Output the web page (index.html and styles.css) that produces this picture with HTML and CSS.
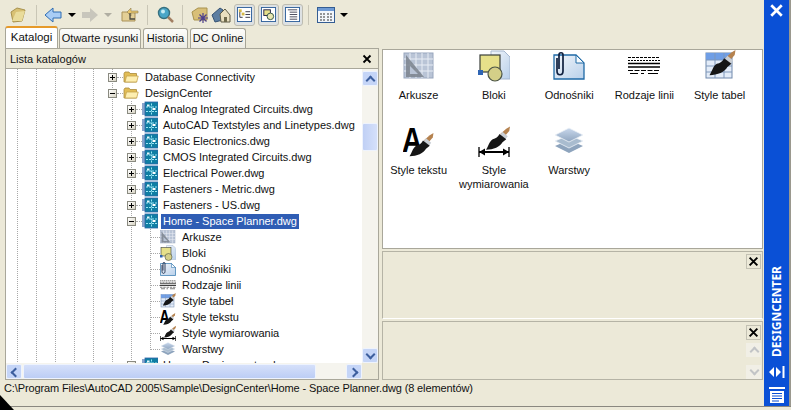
FILE: index.html
```html
<!DOCTYPE html>
<html lang="pl">
<head>
<meta charset="utf-8">
<title>DesignCenter</title>
<link rel="stylesheet" href="styles.css">
</head>
<body>
<svg class="defs" width="0" height="0" aria-hidden="true">
  <defs>
    <linearGradient id="g-doc" x1="0" y1="0" x2="1" y2="1"><stop offset="0" stop-color="#f2f6fb"/><stop offset="1" stop-color="#b9d0ea"/></linearGradient>
    <linearGradient id="g-lay" x1="0" y1="0" x2="0" y2="1"><stop offset="0" stop-color="#c9d8ec"/><stop offset="1" stop-color="#8fa5bf"/></linearGradient>
    <symbol id="i-folder" viewBox="0 0 16 16">
      <path d="M1 4.500 2 3h4l1 1.500h6.500V13H1z" fill="#e2bd55" stroke="#a98a3c" stroke-width=".8"/>
      <path d="M2 13 3.500 7h11.700L13.700 13z" fill="#fdeeb0" stroke="#c4a24c" stroke-width=".8"/>
    </symbol>
    <symbol id="i-dwg" viewBox="0 0 16 16">
      <rect x="0" y="2" width="3" height="12" fill="#8aa5cc"/>
      <rect x="3" y="1" width="13" height="14" fill="#0f7ea3" stroke="#2f66a8" stroke-width=".8"/>
      <path d="M9.500 2.500v11M4 6h11M4 10.500h11" stroke="#9be6f4" stroke-width="1" stroke-dasharray="2 1"/>
      <rect x="5" y="3.500" width="2.500" height="2" fill="#e6f8fc"/>
      <rect x="10.500" y="7" width="3" height="2" fill="#fff"/>
    </symbol>
    <symbol id="i-ark" viewBox="0 0 32 32">
      <rect x="1" y="3" width="29" height="25" fill="#b9c4d6" stroke="#98a6bd"/>
      <path d="M7 3v25M13 3v25M19 3v25M25 3v25M1 9h29M1 15h29M1 21h29" stroke="#e8edf5" stroke-width="1"/>
      <path d="M3 5v22h18z" fill="#7a828d" opacity=".85"/>
      <path d="M7 16v8h8z" fill="#b9c4d6"/>
    </symbol>
    <symbol id="i-blo" viewBox="0 0 32 32">
      <path d="M13 1h13l6 6v22H13z" fill="url(#g-doc)" stroke="#a5b7cf"/>
      <rect x="2" y="5" width="20" height="17" fill="#e6e08a" stroke="#3a3f3a" stroke-width="1.200"/>
      <circle cx="17" cy="24" r="7" fill="#d4cf88" stroke="#4b5445" stroke-width="1.200"/>
      <rect x="0" y="20" width="5" height="5" fill="#2f65b4"/>
    </symbol>
    <symbol id="i-odn" viewBox="0 0 32 32">
      <path d="M1 5h22l8 8v16H1z" fill="url(#g-doc)" stroke="#1f6aa6" stroke-width="1.300"/>
      <path d="M23 5v8h8z" fill="#f7fafd" stroke="#1f6aa6"/>
      <path d="M4 8v13c0 5 6 5 6 0V5c0-3-4-3-4 0v14" fill="none" stroke="#10203f" stroke-width="1.700"/>
    </symbol>
    <symbol id="i-lin" viewBox="0 0 32 32">
      <g fill="none" stroke="#000">
        <path d="M0 7.500h32" stroke-dasharray="3 1"/>
        <path d="M0 10.500h32" stroke-dasharray="2 1"/>
        <path d="M0 13.500h32" stroke-width="1.500"/>
        <path d="M0 17h32" stroke-width="1.500"/>
        <path d="M0 20.500h32" stroke-dasharray="5 1.500"/>
        <path d="M2 23.500h8M13 23.500h3M20 23.500h10"/>
      </g>
    </symbol>
    <symbol id="i-brush" viewBox="0 0 32 32">
      <path d="M32 0 31 6 24 14 19 10 27 3z" fill="#b5824f"/>
      <path d="M22 7l7 6-3 4-7-6z" fill="#c9ced4"/>
      <path d="M18 10l9 7-5 4c-3 6-12 10-22 10 3-4 4-11 9-14 4-1 7-3 9-7z" fill="#161616"/>
    </symbol>
    <symbol id="i-tab" viewBox="0 0 32 32">
      <rect x="2" y="3" width="26" height="25" fill="#e3ecf8" stroke="#7189ac"/>
      <rect x="2" y="3" width="26" height="7" fill="#6f9ee6"/>
      <path d="M2 10h26M2 16h26M2 22h26M11 3v25M20 3v25" stroke="#7f97ba"/>
      <use href="#i-brush" x="5" y="0" width="27" height="26"/>
    </symbol>
    <symbol id="i-txt" viewBox="0 0 32 32">
      <text class="glyph-a" transform="translate(-1 27) scale(.8 1)">A</text>
      <use href="#i-brush" x="5" y="8" width="27" height="24"/>
    </symbol>
    <symbol id="i-dim" viewBox="0 0 32 32">
      <use href="#i-brush" x="8" y="1" width="24" height="25"/>
      <path d="M1 22v10M31 22v10" stroke="#000" stroke-width="1.300"/>
      <path d="M1 27h30" stroke="#000" stroke-width="2"/>
      <path d="M1 27l6-3.500v7zM31 27l-6-3.500v7z" fill="#000"/>
    </symbol>
    <symbol id="i-lay" viewBox="0 0 32 32">
      <path d="M16 15 30 21 16 28 2 21z" fill="#8ea4bd"/>
      <path d="M16 10 30 16 16 23 2 16z" fill="#a9bccf" stroke="#eef3f8" stroke-width=".8"/>
      <path d="M16 3 30 10 16 17 2 10z" fill="url(#g-lay)" stroke="#eef3f8" stroke-width=".8"/>
    </symbol>
    <symbol id="i-x" viewBox="0 0 10 10">
      <path d="M1.500 1.500l7 7M8.500 1.500l-7 7" fill="none" stroke="currentColor" stroke-width="1.800"/>
    </symbol>
  </defs>
</svg>

<div class="window">
  <div class="main">
    <div class="toolbar">
      <button class="tool" aria-label="Ładuj">
        <svg width="18" height="18" viewBox="0 0 18 18"><path d="M2 6 8 2l8 2-3 11-9 1z" fill="#d8c173" stroke="#a8924e"/><path d="M3 15 7 6l9-1-3 10z" fill="#e9dc9b"/></svg>
      </button>
      <span class="sep sep-a"></span>
      <button class="tool tool-nav" aria-label="Wstecz">
        <svg width="18" height="18" viewBox="0 0 18 18"><path d="M1 9 9 2v4h8v6H9v4z" fill="#a9cdf5" stroke="#2f6db3"/></svg>
      </button>
      <span class="drop"></span>
      <button class="tool tool-nav" aria-label="Dalej">
        <svg width="18" height="18" viewBox="0 0 18 18"><path d="M17 9 9 2v4H1v6h8v4z" fill="#c8c6bc"/></svg>
      </button>
      <span class="drop drop-off"></span>
      <button class="tool" aria-label="W górę">
        <svg width="18" height="18" viewBox="0 0 18 18"><path d="M1 6h13V15H1z" fill="#e3cf96" stroke="#a99159"/><path d="M10 2v3h7v2h-7v3L6 6z" fill="#e7c56c" stroke="#8f7f55" stroke-width=".6"/><path d="M9 7v6h5" fill="none" stroke="#4a4a42" stroke-width="1.300"/></svg>
      </button>
      <span class="sep"></span>
      <button class="tool" aria-label="Szukaj">
        <svg width="18" height="18" viewBox="0 0 18 18"><circle cx="8" cy="7" r="5.500" fill="#4aa6c8" stroke="#37707f" stroke-width="1.400"/><circle cx="7" cy="5.500" r="2" fill="#c7ecf4"/><path d="m12 11 5 5" stroke="#a27f63" stroke-width="2.500"/></svg>
      </button>
      <span class="sep"></span>
      <button class="tool" aria-label="Ulubione">
        <svg width="18" height="18" viewBox="0 0 18 18"><path d="M1 6 7 2h9v12H3z" fill="#d8bf78" stroke="#a8924e"/><path d="M12 7v10M7 12h10M8.500 8.500l7 7M15.500 8.500l-7 7" stroke="#4b3f8e" stroke-width="1.200"/></svg>
      </button>
      <button class="tool" aria-label="Strona główna">
        <svg width="20" height="18" viewBox="0 0 20 18"><path d="M1 9 9 2l3 2v10L4 16z" fill="#5c7ea1" stroke="#345273"/><path d="m9 8 5-5 5 6v7H10z" fill="#e9dfbf" stroke="#5e5b46"/><rect x="13" y="11" width="3" height="5" fill="#6f6a4c"/></svg>
      </button>
      <button class="tool toggle" aria-label="Widok drzewa">
        <svg width="15" height="15" viewBox="0 0 16 16"><rect x=".5" y=".5" width="15" height="15" fill="#fff" stroke="#31619c"/><path d="M3 4v7h3M9 5h5M9 8h5M9 11h5" stroke="#334" fill="none"/><rect x="2" y="2.500" width="3" height="3" fill="#d4b84a"/><rect x="5" y="6" width="3" height="3" fill="#d4b84a"/></svg>
      </button>
      <button class="tool toggle" aria-label="Podgląd">
        <svg width="15" height="15" viewBox="0 0 16 16"><rect x=".5" y=".5" width="15" height="15" fill="#fff" stroke="#31619c"/><rect x="3" y="3" width="7" height="6" fill="#e6e08a" stroke="#224"/><circle cx="10" cy="10" r="3.500" fill="#e8e6b0" stroke="#354"/></svg>
      </button>
      <button class="tool toggle" aria-label="Opis">
        <svg width="15" height="15" viewBox="0 0 16 16"><rect x=".5" y=".5" width="15" height="15" fill="#fff" stroke="#31619c"/><path d="M3 3h10M5 5.500h8M5 8h8M5 10.500h8M5 13h8" stroke="#445"/></svg>
      </button>
      <span class="sep sep-c"></span>
      <button class="tool" aria-label="Widoki">
        <svg width="18" height="16" viewBox="0 0 18 16"><rect x=".5" y=".5" width="17" height="15" fill="#f2f6fb" stroke="#345d93"/><rect x="1" y="1" width="16" height="3" fill="#6f9bd5"/><path d="M3 7h5M10 7h5M3 10h5M10 10h5M3 13h5M10 13h5" stroke="#333" stroke-dasharray="2 1"/></svg>
      </button>
      <span class="drop"></span>
    </div>

    <div class="tabs">
      <div class="tab tab-active">Katalogi</div>
      <div class="tab tab-open">Otwarte rysunki</div>
      <div class="tab tab-hist">Historia</div>
      <div class="tab tab-dc">DC Online</div>
    </div>

    <div class="panes">
      <section class="left">
        <header class="left-head"><span>Lista katalogów</span><svg class="x"><use href="#i-x"/></svg></header>
        <div class="left-body">
          <div class="tree-wrap">
            <ul class="tree">
              <li class="row d1"><span class="box plus"></span><span class="dash"></span><svg class="ic"><use href="#i-folder"/></svg><span class="lbl">Database Connectivity</span></li>
              <li class="row d1"><span class="box minus"></span><span class="dash"></span><svg class="ic"><use href="#i-folder"/></svg><span class="lbl">DesignCenter</span></li>
              <li class="row d2"><span class="box plus"></span><span class="dash"></span><svg class="ic"><use href="#i-dwg"/></svg><span class="lbl">Analog Integrated Circuits.dwg</span></li>
              <li class="row d2"><span class="box plus"></span><span class="dash"></span><svg class="ic"><use href="#i-dwg"/></svg><span class="lbl">AutoCAD Textstyles and Linetypes.dwg</span></li>
              <li class="row d2"><span class="box plus"></span><span class="dash"></span><svg class="ic"><use href="#i-dwg"/></svg><span class="lbl">Basic Electronics.dwg</span></li>
              <li class="row d2"><span class="box plus"></span><span class="dash"></span><svg class="ic"><use href="#i-dwg"/></svg><span class="lbl">CMOS Integrated Circuits.dwg</span></li>
              <li class="row d2"><span class="box plus"></span><span class="dash"></span><svg class="ic"><use href="#i-dwg"/></svg><span class="lbl">Electrical Power.dwg</span></li>
              <li class="row d2"><span class="box plus"></span><span class="dash"></span><svg class="ic"><use href="#i-dwg"/></svg><span class="lbl">Fasteners - Metric.dwg</span></li>
              <li class="row d2"><span class="box plus"></span><span class="dash"></span><svg class="ic"><use href="#i-dwg"/></svg><span class="lbl">Fasteners - US.dwg</span></li>
              <li class="row d2"><span class="box minus"></span><span class="dash"></span><svg class="ic"><use href="#i-dwg"/></svg><span class="lbl sel">Home - Space Planner.dwg</span></li>
              <li class="row d3"><span class="dash3"></span><svg class="ic"><use href="#i-ark"/></svg><span class="lbl">Arkusze</span></li>
              <li class="row d3"><span class="dash3"></span><svg class="ic"><use href="#i-blo"/></svg><span class="lbl">Bloki</span></li>
              <li class="row d3"><span class="dash3"></span><svg class="ic"><use href="#i-odn"/></svg><span class="lbl">Odnośniki</span></li>
              <li class="row d3"><span class="dash3"></span><svg class="ic"><use href="#i-lin"/></svg><span class="lbl">Rodzaje linii</span></li>
              <li class="row d3"><span class="dash3"></span><svg class="ic"><use href="#i-tab"/></svg><span class="lbl">Style tabel</span></li>
              <li class="row d3"><span class="dash3"></span><svg class="ic"><use href="#i-txt"/></svg><span class="lbl">Style tekstu</span></li>
              <li class="row d3"><span class="dash3"></span><svg class="ic"><use href="#i-dim"/></svg><span class="lbl">Style wymiarowania</span></li>
              <li class="row d3"><span class="dash3"></span><svg class="ic"><use href="#i-lay"/></svg><span class="lbl">Warstwy</span></li>
              <li class="row d2"><span class="box plus"></span><span class="dash"></span><svg class="ic"><use href="#i-dwg"/></svg><span class="lbl">Home - Designcenter.dwg</span></li>
            </ul>
            <div class="vbar">
              <span class="sb-btn up"></span>
              <span class="sb-thumb-v"></span>
              <span class="sb-fill"></span>
              <span class="sb-btn down"></span>
            </div>
          </div>
          <div class="hbar">
            <div class="htrack">
              <span class="sb-btn left-b"></span>
              <span class="sb-thumb-h"></span>
              <span class="sb-btn right-b"></span>
            </div>
          </div>
        </div>
      </section>

      <div class="right">
        <div class="content">
          <figure class="item"><svg class="big"><use href="#i-ark"/></svg><figcaption>Arkusze</figcaption></figure>
          <figure class="item"><svg class="big"><use href="#i-blo"/></svg><figcaption>Bloki</figcaption></figure>
          <figure class="item"><svg class="big"><use href="#i-odn"/></svg><figcaption>Odnośniki</figcaption></figure>
          <figure class="item"><svg class="big"><use href="#i-lin"/></svg><figcaption>Rodzaje linii</figcaption></figure>
          <figure class="item"><svg class="big"><use href="#i-tab"/></svg><figcaption>Style tabel</figcaption></figure>
          <figure class="item"><svg class="big"><use href="#i-txt"/></svg><figcaption>Style tekstu</figcaption></figure>
          <figure class="item"><svg class="big"><use href="#i-dim"/></svg><figcaption>Style wymiarowania</figcaption></figure>
          <figure class="item"><svg class="big"><use href="#i-lay"/></svg><figcaption>Warstwy</figcaption></figure>
        </div>
        <div class="preview"><span class="close-sq"><svg><use href="#i-x"/></svg></span></div>
        <div class="descr">
          <span class="close-sq"><svg><use href="#i-x"/></svg></span>
          <span class="mini-btn mini-up"></span>
          <span class="mini-btn mini-down"></span>
        </div>
      </div>
    </div>

    <div class="status">C:\Program Files\AutoCAD 2005\Sample\DesignCenter\Home - Space Planner.dwg (8 elementów)</div>
  </div>

  <aside class="side">
    <svg class="side-x"><use href="#i-x"/></svg>
    <span class="side-title">DESIGNCENTER</span>
    <svg class="side-auto" width="16" height="12" viewBox="0 0 16 12"><path d="M0 6l5-5v10zM7 1l5 5-5 5z" fill="#fff"/><path d="M13.500 0h2v12h-2z" fill="#fff"/></svg>
    <svg class="side-menu" width="16" height="16" viewBox="0 0 16 16"><path d="M0 0h16v2H0zM1 4h14v12H1z" fill="#fff"/><path d="M3 6.500h10M3 9h10M3 11.500h10M3 14h7" stroke="#0a4fd4" stroke-width="1.200"/></svg>
  </aside>
</div>
<span class="corner"></span>
</body>
</html>
```
FILE: styles.css
```css
* { box-sizing: border-box; }
html, body { margin: 0; padding: 0; }
body {
  width: 791px;
  height: 410px;
  overflow: hidden;
  position: relative;
  background: #ece9d8;
  font: 11px/16px "Liberation Sans", Arial, sans-serif;
  color: #111;
}
.defs { position: absolute; }
.glyph-a { font: 700 35px "Liberation Sans", Arial, sans-serif; fill: #000; }

.window { display: flex; width: 791px; height: 407px; border-bottom: 1px solid #8a8880; }
.main { width: 764px; display: flex; flex-direction: column; padding-left: 2px; }

.toolbar { height: 26px; display: flex; align-items: center; padding-left: 5px; padding-top: 3px; }
.tool {
  width: 21px; height: 22px; padding: 0; border: 0; background: none; flex: none;
  display: flex; align-items: center; justify-content: center;
}
.tool-nav { width: 22px; }
.toggle { height: 22px; background: #dde1e3; border: 1px solid #bdbcb0; border-radius: 3px; margin-left: 3px; }
.sep { width: 1px; height: 20px; flex: none; background: #c9c6b6; margin: 0 6px 0 7px; }
.sep-a { margin: 0 5px 0 8px; }
.sep-c { margin: 0 6px 0 5px; }
.drop { width: 0; height: 0; flex: none; border: 4px solid transparent; border-top: 4px solid #000; border-bottom: 0; margin: 0 3px 0 4px; }
.drop-off { border-top-color: #b0aea2; margin: 0 7px 0 3px; }

.tabs { height: 22px; display: flex; padding-left: 3px; font-size: 11px; }
.tab {
  height: 21px; margin-top: 2px; margin-right: 2px; padding: 0;
  line-height: 19px; text-align: center; white-space: nowrap;
  background: linear-gradient(#fdfdfb, #ecebe2);
  border: 1px solid #a7a597; border-bottom: 0; border-radius: 3px 3px 0 0;
}
.tab-active { width: 53px; height: 22px; margin-top: 0; margin-right: 1px; background: #fff; border-top: 2px solid #e69a2a; line-height: 18px; font-size: 11.5px; }
.tab-open { width: 82px; }
.tab-hist { width: 45px; }
.tab-dc { width: 56px; }

.panes { height: 332px; display: flex; gap: 3px; }
.left { width: 374px; flex: none; display: flex; flex-direction: column; margin-left: 3px; border: 1px solid #a9a79a; }
.left-head { height: 20px; flex: none; padding: 0 6px 0 4px; display: flex; justify-content: space-between; align-items: center; border-bottom: 1px solid #a9a79a; }
.x { width: 10px; height: 10px; color: #000; }
.left-body { flex: 1; display: flex; flex-direction: column; min-height: 0; }
.tree-wrap { flex: 1; display: flex; min-height: 0; background: #fff; }
.tree {
  list-style: none; margin: 0; padding: 0; flex: 1; overflow: hidden;
  background-image:
    repeating-linear-gradient(#a8a8a8 0 1px, transparent 1px 2px),
    repeating-linear-gradient(#a8a8a8 0 1px, transparent 1px 2px),
    repeating-linear-gradient(#a8a8a8 0 1px, transparent 1px 2px),
    repeating-linear-gradient(#a8a8a8 0 1px, transparent 1px 2px),
    repeating-linear-gradient(#a8a8a8 0 1px, transparent 1px 2px),
    repeating-linear-gradient(#a8a8a8 0 1px, transparent 1px 2px),
    repeating-linear-gradient(#a8a8a8 0 1px, transparent 1px 2px),
    repeating-linear-gradient(#a8a8a8 0 1px, transparent 1px 2px);
  background-repeat: no-repeat;
  background-size: 1px 100%, 1px 100%, 1px 100%, 1px 100%, 1px 100%, 1px 100%, 1px 100%, 1px 120px;
  background-position: 11px 0, 30px 0, 49px 0, 68px 0, 87px 0, 106px 0, 125px 32px, 144px 160px;
}
.row { height: 16px; display: flex; align-items: center; white-space: nowrap; }
.d1 { padding-left: 102px; }
.d2 { padding-left: 121px; }
.d3 { padding-left: 144px; }
.box {
  width: 9px; height: 9px; flex: none; position: relative; background: linear-gradient(135deg, #fff, #d8d4c4);
  border: 1px solid #8a8a80;
}
.plus::before, .minus::before { content: ""; position: absolute; left: 1px; top: 3px; width: 5px; height: 1px; background: #000; }
.plus::after { content: ""; position: absolute; left: 3px; top: 1px; width: 1px; height: 5px; background: #000; }
.dash { height: 1px; flex: none; border-top: 1px dotted #a8a8a8; }
.d1 .dash { width: 6px; }
.d2 .dash { width: 6px; }
.dash3 { width: 10px; height: 1px; flex: none; border-top: 1px dotted #a8a8a8; }
.ic { width: 16px; height: 16px; flex: none; }
.lbl { padding: 0 2px; margin-left: 3px; height: 15px; line-height: 15px; }
.d1 .lbl, .d3 .lbl { margin-left: 4px; }
.sel { background: #2f5db4; color: #fff; }

.vbar { width: 16px; flex: none; display: flex; flex-direction: column; background: #f5f4ee; padding-top: 2px; }
.sb-btn { flex: none; width: 16px; height: 15px; position: relative; background: #c5d5f7; border: 1px solid #eef3fd; border-radius: 2px; }
.sb-btn::after { content: ""; position: absolute; width: 5px; height: 5px; border: solid #3d5f9e; border-width: 2px 0 0 2px; }
.up::after { left: 4px; top: 5px; transform: rotate(45deg); }
.down::after { left: 4px; top: 2px; transform: rotate(225deg); }
.left-b::after { left: 5px; top: 4px; transform: rotate(-45deg); }
.right-b::after { left: 3px; top: 4px; transform: rotate(135deg); }
.sb-thumb-v { flex: none; height: 28px; margin-top: 37px; width: 16px; background: linear-gradient(90deg, #c0d0f5, #d5e0fa); border: 1px solid #eef3fd; border-radius: 2px; }
.sb-fill { flex: 1; }
.hbar { height: 16px; flex: none; display: flex; padding-right: 16px; }
.htrack { flex: 1; display: flex; align-items: center; background: #f5f4ee; }
.sb-thumb-h { width: 293px; height: 15px; margin-left: 1px; background: linear-gradient(#d5e0fa, #bccdf5); border: 1px solid #eef3fd; border-radius: 2px; }
.htrack .right-b { margin-left: auto; }

.right { flex: 1; display: flex; flex-direction: column; gap: 2px; padding-right: 1px; }
.content {
  height: 201px; background: #fff; border: 1px solid #a9a79a; margin-top: 1px;
  display: grid; grid-template-columns: repeat(5, 75.25px); grid-auto-rows: 75px;
}
.item { margin: 0 0 0 -4px; display: flex; flex-direction: column; align-items: center; }
.big { width: 32px; height: 32px; flex: none; }
.item figcaption { margin-top: 6px; text-align: center; line-height: 14px; }
.preview { height: 68px; border: 1px solid #b5b3a5; border-bottom-color: #fff; display: flex; justify-content: flex-end; padding: 2px 1px 0 0; }
.descr { flex: 1; border: 1px solid #b5b3a5; display: flex; flex-direction: column; align-items: flex-end; padding: 3px 1px 0 0; }
.close-sq { width: 15px; height: 15px; flex: none; display: flex; align-items: center; justify-content: center; background: #ece9d8; border: 1px solid #c3c1b3; color: #000; }
.close-sq svg { width: 11px; height: 11px; }
.mini-btn { width: 15px; height: 14px; flex: none; position: relative; background: #f1efe6; }
.mini-up { margin-top: 3px; }
.mini-down { margin-top: 8px; }
.mini-btn::after { content: ""; position: absolute; left: 5px; width: 5px; height: 5px; border: solid #c2c4c6; border-width: 2px 0 0 2px; }
.mini-up::after { top: 5px; transform: rotate(45deg); }
.mini-down::after { top: 2px; transform: rotate(225deg); }

.status { height: 20px; padding-left: 2px; line-height: 16px; white-space: nowrap; letter-spacing: -0.12px; }

.side {
  width: 27px; background: #0a50d6; border-right: 2px solid #9a988e;
  display: flex; flex-direction: column; align-items: center; color: #fff;
}
.side-x { width: 15px; height: 15px; flex: none; margin-top: 3px; }
.side-title {
  margin-top: auto; writing-mode: vertical-rl; transform: rotate(180deg);
  font: 700 12px/16px "Noto Sans", sans-serif;
}
.side-auto { margin-top: 9px; flex: none; }
.side-menu { margin-top: 9px; margin-bottom: 3px; flex: none; }

.corner {
  position: absolute; left: 0; bottom: 0; width: 0; height: 0;
  border-left: 14px solid #000; border-top: 15px solid transparent;
}
```
